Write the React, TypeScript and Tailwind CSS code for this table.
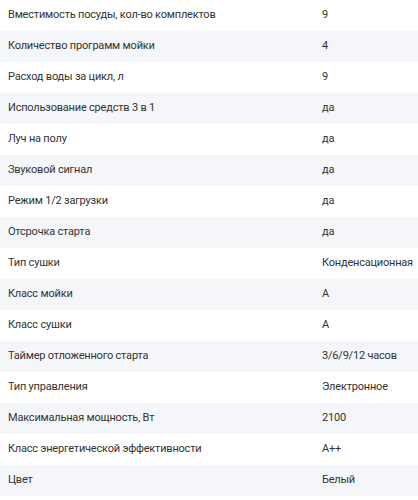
const specs = [
  ["Вместимость посуды, кол-во комплектов", "9"],
  ["Количество программ мойки", "4"],
  ["Расход воды за цикл, л", "9"],
  ["Использование средств 3 в 1", "да"],
  ["Луч на полу", "да"],
  ["Звуковой сигнал", "да"],
  ["Режим 1/2 загрузки", "да"],
  ["Отсрочка старта", "да"],
  ["Тип сушки", "Конденсационная"],
  ["Класс мойки", "A"],
  ["Класс сушки", "A"],
  ["Таймер отложенного старта", "3/6/9/12 часов"],
  ["Тип управления", "Электронное"],
  ["Максимальная мощность, Вт", "2100"],
  ["Класс энергетической эффективности", "A++"],
  ["Цвет", "Белый"],
];

export default function App() {
  return (
    <div className="w-[418px] bg-white font-['Roboto',sans-serif] text-[11px] tracking-[-0.2px] text-[#333]">
      {specs.map(([label, value], i) => (
        <div
          key={label}
          className={`flex h-[31px] items-center ${i % 2 === 1 ? "bg-[#f5f6f9]" : "bg-white"}`}
        >
          <div className="w-[322px] pl-2">{label}</div>
          <div className="flex-1 whitespace-nowrap">{value}</div>
        </div>
      ))}
    </div>
  );
}
